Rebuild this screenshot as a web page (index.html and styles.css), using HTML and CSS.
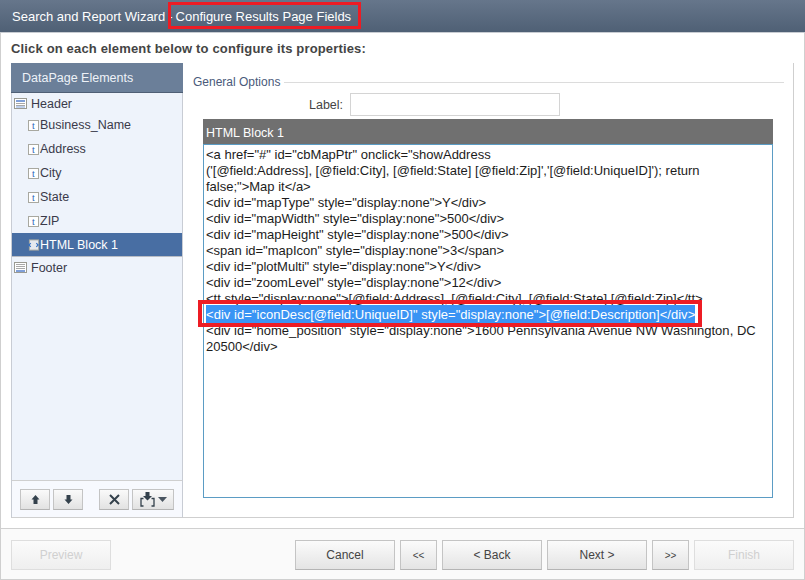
FILE: index.html
```html
<!DOCTYPE html>
<html lang="en">
<head>
<meta charset="utf-8">
<title>Search and Report Wizard</title>
<link rel="stylesheet" href="styles.css">
</head>
<body>
<div class="window">
  <header class="titlebar"><span>Search and Report Wizard</span><span class="dash">-</span><span>Configure Results Page Fields</span></header>
  <div class="mark mark-title"></div>
  <main class="main">
    <h1 class="prompt">Click on each element below to configure its properties:</h1>
    <div class="panel">
      <aside class="side">
        <div class="side-head">DataPage Elements</div>
        <div class="tree">
          <div class="section"><svg class="ico-sec" viewBox="0 0 13 11"><rect x=".5" y=".5" width="12" height="10" fill="#fff" stroke="#9a9a92"/><rect x="2" y="2" width="9" height="2" fill="#7f9fd8"/><path d="M2 5.500h9M2 7.500h9" stroke="#a8a8a8"/><rect x="2" y="8.500" width="9" height="1" fill="#7f9fd8"/></svg>Header</div>
          <div class="field"><span class="t">t</span>Business_Name</div>
          <div class="field"><span class="t">t</span>Address</div>
          <div class="field"><span class="t">t</span>City</div>
          <div class="field"><span class="t">t</span>State</div>
          <div class="field"><span class="t">t</span>ZIP</div>
          <div class="field active"><svg class="ico-html" viewBox="0 0 13 12"><rect x="1.500" y=".5" width="10" height="11" fill="#e4e8ee" stroke="#a8a8a0"/><path d="M3 4 1 6l2 2M9 4l2 2-2 2" fill="none" stroke="#2f6fc4" stroke-width="1.200"/></svg>HTML Block 1</div>
          <div class="section footer-sec"><svg class="ico-sec" viewBox="0 0 13 11"><rect x=".5" y=".5" width="12" height="10" fill="#fff" stroke="#9a9a92"/><path d="M2 2.500h9M2 4.500h9M2 6.500h9" stroke="#a8a8a8"/><rect x="2" y="8" width="9" height="2" fill="#7f9fd8"/></svg>Footer</div>
        </div>
        <div class="tools">
          <button class="tool"><svg width="9" height="9" viewBox="0 0 9 9"><path d="M4.500 0 8.500 4.500H6.500V9H2.500V4.500H.5Z" fill="#34414c"/></svg></button>
          <button class="tool"><svg width="9" height="9" viewBox="0 0 9 9"><path d="M2.500 0H6.500V4.500H8.500L4.500 9 .5 4.500H2.500Z" fill="#34414c"/></svg></button>
          <button class="tool tool-x"><svg width="11" height="11" viewBox="0 0 11 11"><path d="M1 1 10 10M10 1 1 10" stroke="#34414c" stroke-width="2"/></svg></button>
          <button class="tool tool-wide"><svg width="15" height="15" viewBox="0 0 15 15"><path d="M5.500 0H9.500V4H12L7.500 8.500 3 4H5.500Z" fill="#34414c"/><path d="M3.500 6.500H1V14H3.500M11.500 6.500H14V14H11.500" fill="none" stroke="#34414c" stroke-width="1.300"/></svg><svg width="9" height="5" viewBox="0 0 9 5"><path d="M0 0H9L4.500 5Z" fill="#4a5560"/></svg></button>
        </div>
      </aside>
      <section class="content">
        <div class="legend"><span>General Options</span><i></i></div>
        <div class="label-row"><label class="label-txt" for="lbl">Label:</label><input class="label-input" id="lbl" type="text"></div>
        <div class="block">
          <div class="block-head">HTML Block 1</div>
          <div class="code">
            <div>&lt;a href="#" id="cbMapPtr" onclick="showAddress</div>
            <div>('[@field:Address], [@field:City], [@field:State] [@field:Zip]','[@field:UniqueID]'); return</div>
            <div>false;"&gt;Map it&lt;/a&gt;</div>
            <div>&lt;div id="mapType" style="display:none"&gt;Y&lt;/div&gt;</div>
            <div>&lt;div id="mapWidth" style="display:none"&gt;500&lt;/div&gt;</div>
            <div>&lt;div id="mapHeight" style="display:none"&gt;500&lt;/div&gt;</div>
            <div>&lt;span id="mapIcon" style="display:none"&gt;3&lt;/span&gt;</div>
            <div>&lt;div id="plotMulti" style="display:none"&gt;Y&lt;/div&gt;</div>
            <div>&lt;div id="zoomLevel" style="display:none"&gt;12&lt;/div&gt;</div>
            <div>&lt;tt style="display:none"&gt;[@field:Address], [@field:City], [@field:State] [@field:Zip]&lt;/tt&gt;</div>
            <div><span class="sel">&lt;div id="iconDesc[@field:UniqueID]" style="display:none"&gt;[@field:Description]&lt;/div&gt;</span></div>
            <div class="wide">&lt;div id="home_position" style="display:none"&gt;1600 Pennsylvania Avenue NW Washington, DC</div>
            <div>20500&lt;/div&gt;</div>
          </div>
        </div>
      </section>
    </div>
  </main>
  <div class="mark mark-code"></div>
  <footer class="foot">
    <button class="btn off">Preview</button>
    <div class="foot-right">
      <button class="btn">Cancel</button>
      <button class="btn small">&lt;&lt;</button>
      <button class="btn">&lt; Back</button>
      <button class="btn">Next &gt;</button>
      <button class="btn small">&gt;&gt;</button>
      <button class="btn off">Finish</button>
    </div>
  </footer>
</div>
</body>
</html>
```
FILE: styles.css
```css
* { box-sizing: border-box; }
html, body { margin: 0; padding: 0; }
body { width: 805px; height: 580px; overflow: hidden; background: #fff; font-family: "Liberation Sans", Arial, sans-serif; font-size: 12px; color: #3a3a3a; }
.window { position: relative; width: 805px; height: 580px; border-left: 1px solid #cfcfcf; border-right: 1px solid #cfcfcf; border-bottom: 1px solid #cfcfcf; display: flex; flex-direction: column; }
.titlebar { height: 33px; margin-left: -1px; margin-right: -1px; padding: 1px 0 0 12px; display: flex; align-items: center; color: #fff; font-size: 13px; background: linear-gradient(#66768b, #4f6075); border-bottom: 1px solid #c8ccd2; flex: none; }
.dash { margin: 0 3px; }
.mark { position: absolute; border: solid #ed1c24; pointer-events: none; }
.mark-title { left: 167px; top: 2px; width: 193px; height: 27px; border-width: 3px; }
.mark-code { left: 197px; top: 300px; width: 504px; height: 27px; border-width: 4px; }
.main { flex: 1; padding: 8px 10px 10px; display: flex; flex-direction: column; min-height: 0; border-bottom: 1px solid #d0d0d0; }
.prompt { margin: 0 0 7px; font-size: 13px; line-height: 15px; font-weight: bold; letter-spacing: 0.16px; color: #444; }
.panel { width: 783px; height: 455px; display: flex; border-right: 1px solid #cfcfcf; border-bottom: 1px solid #cfcfcf; }
.side { width: 172px; flex: none; border-left: 1px solid #c8ccd4; border-right: 1px solid #c8ccd4; border-bottom: 1px solid #cfcfcf; display: flex; flex-direction: column; margin-bottom: -1px; }
.side-head { height: 30px; margin: 0 -1px; padding-left: 11px; display: flex; align-items: center; color: #eef2f8; font-size: 12.500px; background: #6b7f99; border-bottom: 1px solid #4f5f75; flex: none; }
.tree { flex: 1; background: #eef3fb; padding-top: 1px; font-size: 12.500px; }
.section { height: 19px; padding-left: 2px; display: flex; align-items: center; gap: 4px; color: #3a3a4a; }
.footer-sec { height: 21px; }
.ico-sec { width: 13px; height: 11px; flex: none; }
.field { height: 24px; padding-left: 16px; display: flex; align-items: center; color: #3a3a4a; }
.t { width: 11px; height: 11px; margin-right: 1px; border: 1px solid #a8a8a0; background: #fff; color: #2a62b8; font: 10px/9px "Liberation Serif", serif; text-align: center; flex: none; }
.active { background: #486ea3; color: #fff; border-bottom: 1px solid #b8bcc4; }
.ico-html { width: 12px; height: 12px; margin-right: 0; flex: none; }
.tools { height: 37px; flex: none; background: #f7f9fe; border-top: 1px solid #cfcfcf; padding: 8px 0 0 8px; display: flex; }
.tool { width: 30px; height: 21px; padding: 0; margin-right: 3px; border: 1px solid #c4c4c4; border-bottom-color: #b4b4b4; background: linear-gradient(#fafafa, #e2e2e2); display: flex; align-items: center; justify-content: center; gap: 3px; }
.tool-x { margin-left: 13px; }
.tool-wide { width: 42px; margin-right: 0; }
.content { flex: 1; padding: 12px 9px 0 10px; min-width: 0; }
.legend { display: flex; align-items: center; gap: 4px; height: 14px; color: #4a5a7a; }
.legend i { flex: 1; height: 1px; background: #dcdcdc; margin-top: 1px; }
.label-row { height: 23px; margin-top: 4px; display: flex; align-items: center; padding-left: 116px; }
.label-txt { width: 34px; margin-right: 7px; text-align: right; color: #444; font-size: 12.500px; white-space: nowrap; }
.label-input { width: 210px; height: 23px; border: 1px solid #d4d4d4; background: #fff; padding: 0; }
.block { width: 570px; height: 379px; margin: 3px 0 0 10px; display: flex; flex-direction: column; }
.block-head { height: 25px; padding: 2px 0 0 3px; background: #707070; color: #fff; display: flex; align-items: center; font-size: 12.500px; flex: none; }
.code { flex: 1; border: 1px solid #5b9cc4; background: #fff; padding: 2px 2px; color: #1c1c1c; font-size: 13px; line-height: 16px; white-space: nowrap; }
.sel { background: #3a94f4; color: #fff; padding: 2px 0 1px; letter-spacing: 0.035px; }
.wide { letter-spacing: 0.035px; }
.foot { height: 50px; flex: none; background: #fafafa; padding: 11px 10px 0; display: flex; justify-content: space-between; }
.foot-right { display: flex; gap: 5px; }
.btn { width: 100px; height: 30px; padding: 0; border: 1px solid #c4c4c4; border-bottom-color: #b4b4b4; background: linear-gradient(#fbfbfb, #e4e4e4); font: 12px "Liberation Sans", Arial, sans-serif; color: #444; }
.small { width: 37px; font-size: 10px; }
.off { color: #d0d0d0; border-color: #dedede; background: linear-gradient(#fbfbfb, #efefef); }
```
